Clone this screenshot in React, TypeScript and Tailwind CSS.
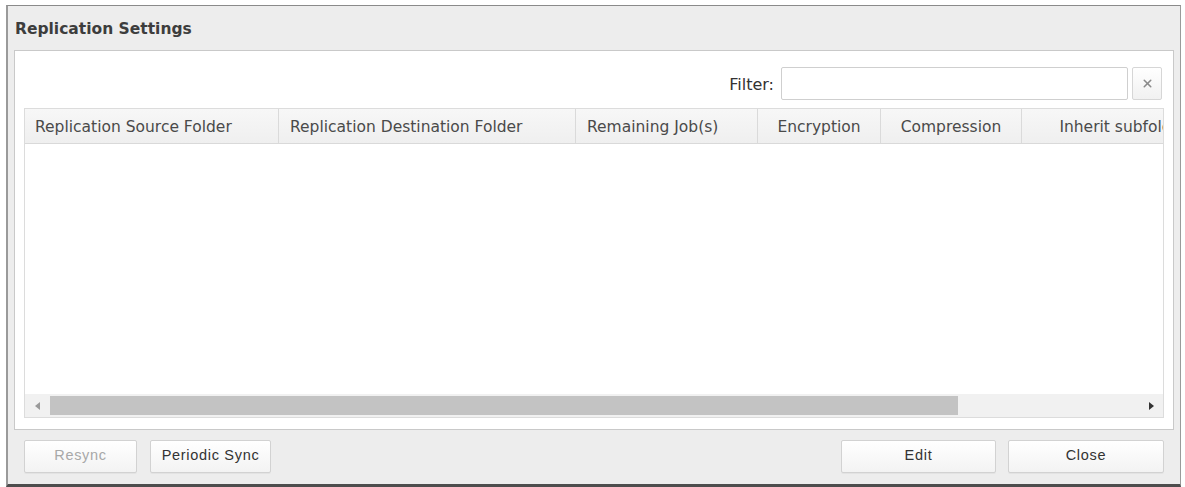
import { X } from 'lucide-react';

const columns = [
  { label: 'Replication Source Folder', width: 'w-[254px]', align: 'justify-start pl-[10px]' },
  { label: 'Replication Destination Folder', width: 'w-[297px]', align: 'justify-start pl-[11px]' },
  { label: 'Remaining Job(s)', width: 'w-[182px]', align: 'justify-start pl-[11px]' },
  { label: 'Encryption', width: 'w-[123px]', align: 'justify-center' },
  { label: 'Compression', width: 'w-[141px]', align: 'justify-center' },
  { label: 'Inherit subfolders', width: 'w-[212px]', align: 'justify-center' },
];

function Button({ children, disabled, className }: { children: string; disabled?: boolean; className?: string }) {
  return (
    <button
      disabled={disabled}
      className={`flex h-[33px] items-center justify-center rounded-[2px] border border-[#d2d2d2] bg-gradient-to-b from-white to-[#f3f3f3] font-['Liberation_Sans',Arial,sans-serif] text-[14.5px] tracking-[0.7px] shadow-[0_1px_0_rgba(0,0,0,0.04)] ${
        disabled ? 'text-[#a8a8a8]' : 'text-[#333]'
      } ${className ?? ''}`}
    >
      {children}
    </button>
  );
}

export default function App() {
  return (
    <div className="h-[487px] w-[1185px] bg-white pl-[6px] pr-[4px] pt-[5px] font-['DejaVu_Sans',sans-serif]">
      <div className="flex h-full flex-col border border-b-[3px] border-l-[2px] border-[#9a9a9a] border-b-[#4d4d4d] border-t-[#8a8a8a] bg-[#ededed]">
        {/* Title */}
        <div className="flex h-[44px] shrink-0 items-center pl-[7px] pt-[3px] text-[15.5px] font-bold text-[#3d3d3d]">
          Replication Settings
        </div>

        {/* Panel */}
        <div className="mx-[6px] flex h-[380px] shrink-0 flex-col border border-[#c9c9c9] bg-white px-[9px] pb-[11px] pt-[16px]">
          {/* Filter row */}
          <div className="flex h-[33px] items-center justify-end gap-[7px] pr-[2px]">
            <span className="pt-[2px] text-[16px] text-[#333]">Filter:</span>
            <div className="flex h-[33px] items-center gap-[4px]">
              <input className="h-full w-[347px] rounded-[2px] border border-[#cfcfcf] bg-white px-2 text-[14px] outline-none" />
              <div className="flex h-full w-[30px] items-center justify-center rounded-[2px] border border-[#d6d6d6] bg-gradient-to-b from-white to-[#f1f1f1]">
                <X className="size-[13px] text-[#8a8a8a]" strokeWidth={2.8} />
              </div>
            </div>
          </div>

          {/* Table */}
          <div className="mt-[8px] flex flex-1 flex-col overflow-hidden border border-[#dcdcdc]">
            <div className="flex h-[35px] shrink-0 border-b border-[#d9d9d9] bg-gradient-to-b from-[#f7f7f7] to-[#efefef]">
              {columns.map((col) => (
                <div
                  key={col.label}
                  className={`flex shrink-0 items-center whitespace-nowrap border-r border-[#dadada] pt-[3px] text-[15.5px] text-[#4a4a4a] ${col.width} ${col.align}`}
                >
                  {col.label}
                </div>
              ))}
            </div>
            <div className="flex-1 bg-white" />

            {/* Horizontal scrollbar */}
            <div className="flex h-[23px] shrink-0 items-center bg-[#f1f1f1]">
              <div className="flex w-[25px] items-center justify-center">
                <svg width="6" height="8" viewBox="0 0 6 8">
                  <path d="M5 0 L0 4 L5 8 Z" fill="#9a9a9a" />
                </svg>
              </div>
              <div className="h-[19px] w-[908px] bg-[#c3c3c3]" />
              <div className="flex-1" />
              <div className="flex w-[25px] items-center justify-center">
                <svg width="6" height="8" viewBox="0 0 6 8">
                  <path d="M1 0 L6 4 L1 8 Z" fill="#333" />
                </svg>
              </div>
            </div>
          </div>
        </div>

        {/* Buttons */}
        <div className="flex flex-1 items-center px-[16px] pb-[2px]">
          <div className="flex gap-[13px]">
            <Button disabled className="w-[113px]">
              Resync
            </Button>
            <Button className="w-[121px]">Periodic Sync</Button>
          </div>
          <div className="ml-auto flex gap-[12px]">
            <Button className="w-[155px]">Edit</Button>
            <Button className="w-[156px]">Close</Button>
          </div>
        </div>
      </div>
    </div>
  );
}
